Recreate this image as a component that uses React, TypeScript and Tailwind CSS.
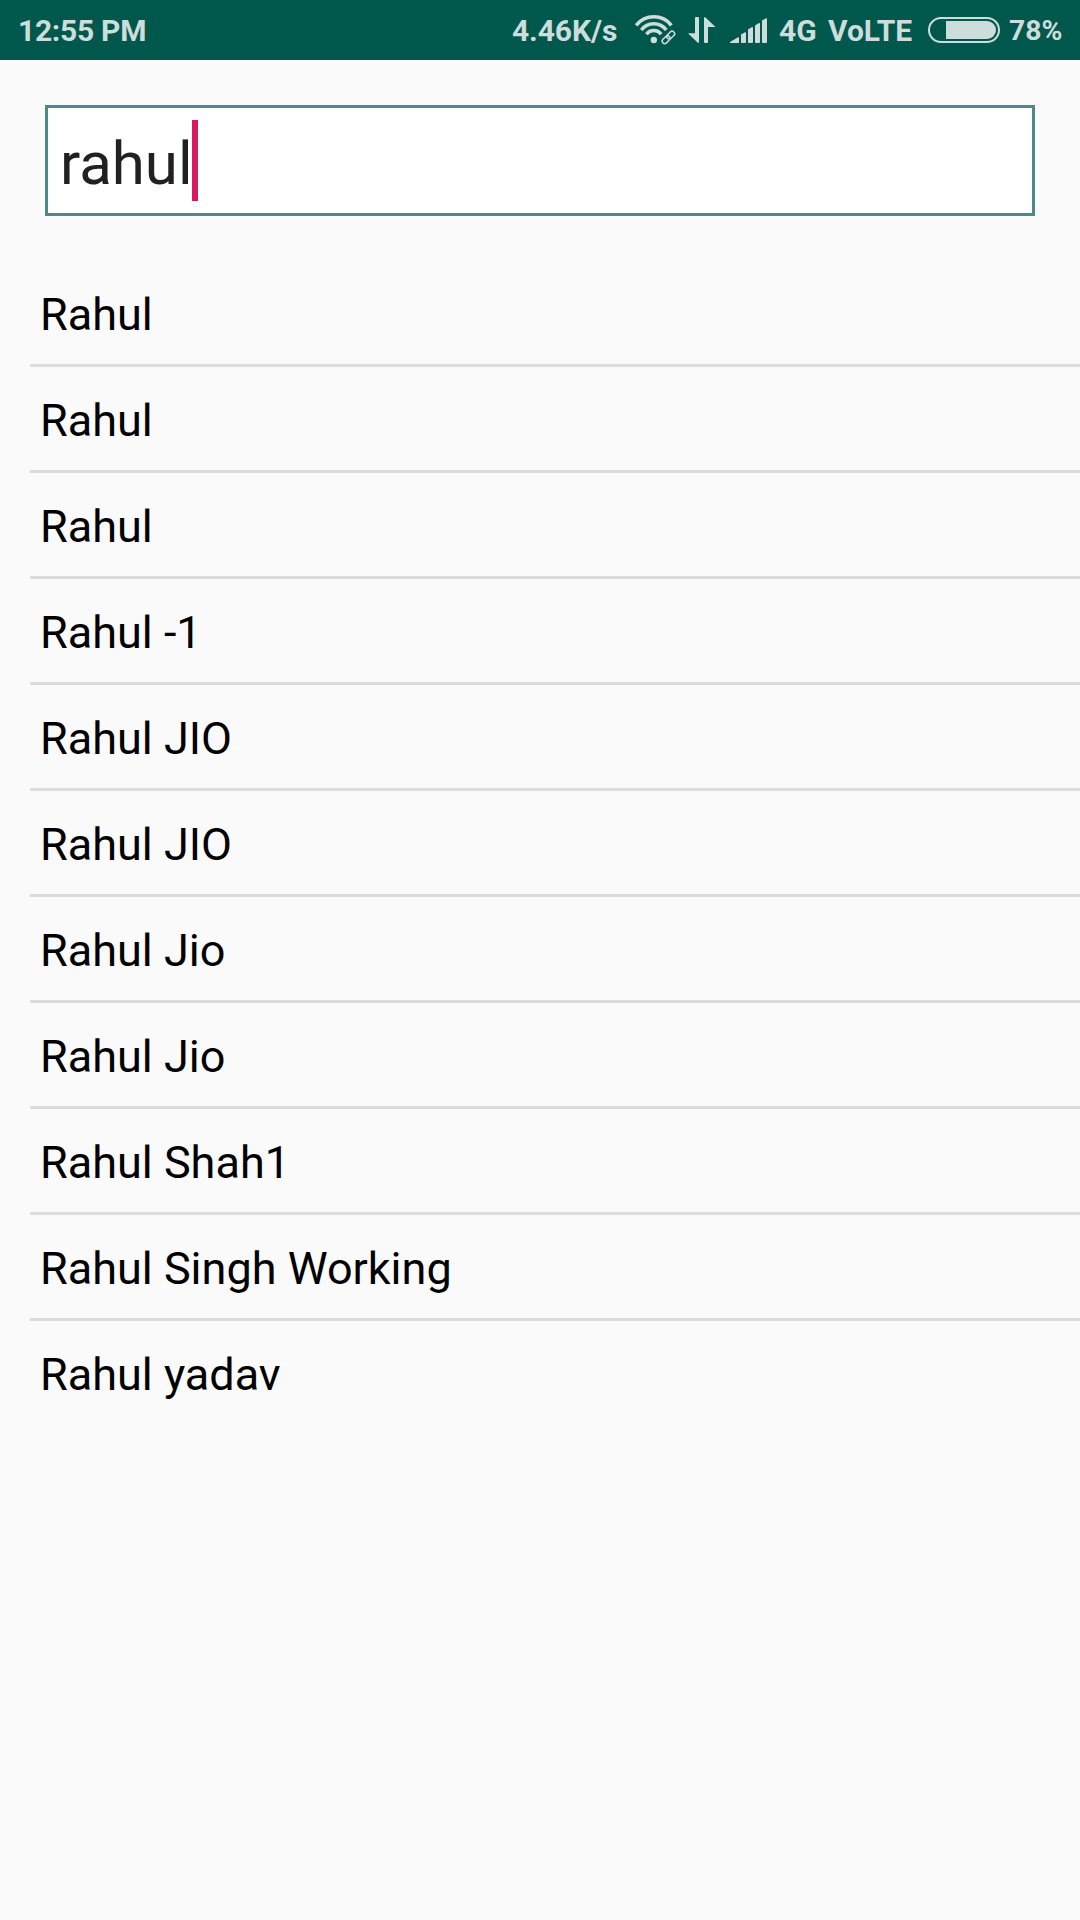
const contacts = [
  'Rahul',
  'Rahul',
  'Rahul',
  'Rahul -1',
  'Rahul JIO',
  'Rahul JIO',
  'Rahul Jio',
  'Rahul Jio',
  'Rahul Shah1',
  'Rahul Singh Working',
  'Rahul yadav',
];

function WifiLinkIcon() {
  return (
    <svg className="h-[60px] w-[42px] shrink-0" viewBox="635 0 42 60" fill="none" stroke="currentColor">
      <path d="M636.2 25.4 A22.3 22.3 0 0 1 671.4 25.4" strokeWidth="3.6" />
      <path d="M641.3 30 A15.6 15.6 0 0 1 666.3 30" strokeWidth="3.5" />
      <path d="M646.4 34.2 A9.3 9.3 0 0 1 661.2 34.2" strokeWidth="3.5" />
      <circle cx="653.8" cy="40" r="3.2" fill="currentColor" stroke="none" />
      <g transform="rotate(-45 668.4 37.4)" strokeWidth="1.5">
        <rect x="660.7" y="34.9" width="9" height="5" rx="2.5" />
        <rect x="667.1" y="34.9" width="9" height="5" rx="2.5" />
      </g>
    </svg>
  );
}

function DataArrowsIcon() {
  return (
    <svg className="h-[60px] w-[28px] shrink-0" viewBox="688 0 28 60" fill="currentColor">
      <path d="M695 18 Q695 17 696 17 H698 Q699 17 699 18 V42 Q699 43 698 43 L688 33.2 H695 Z" />
      <path d="M704 18 Q704 17 705 17 L715.5 27 H708 V42 Q708 43 707 43 H705 Q704 43 704 42 Z" />
    </svg>
  );
}

function SignalIcon() {
  return (
    <svg className="h-[60px] w-[37px] shrink-0" viewBox="730 0 37 60" fill="currentColor">
      <path d="M730 43 V42 L738 37.3 Q739 37 739 38 V43 Z" />
      <path d="M741 34.5 L745 32.2 Q746 32 746 33 V42 Q746 43 745 43 H742 Q741 43 741 42 Z" />
      <path d="M748 29.5 L752 27 Q753 26.8 753 28 V42 Q753 43 752 43 H749 Q748 43 748 42 Z" />
      <path d="M755 25.5 L759 23 Q760 22.8 760 24 V42 Q760 43 759 43 H756 Q755 43 755 42 Z" />
      <path d="M762 20.5 L766 18.2 Q767 18 767 19 V42 Q767 43 766 43 H763 Q762 43 762 42 Z" />
    </svg>
  );
}

function BatteryIcon() {
  return (
    <svg className="h-[60px] w-[72px] shrink-0" viewBox="928 0 72 60" fill="none">
      <rect x="929" y="18" width="70" height="24" rx="12" stroke="currentColor" strokeWidth="2" />
      <path d="M946 21 H987 A9 9 0 0 1 987 39 H946 Z" fill="currentColor" />
    </svg>
  );
}

function StatusBar() {
  return (
    <header className="flex h-[60px] items-center bg-[#00574b] pl-[18px] text-[30px] leading-[60px] font-bold whitespace-nowrap text-[#ccdddb]">
      <span className="w-[494px] pt-[2px] tracking-[-0.28px]">12:55 PM</span>
      <span className="w-[123px] pt-[2px] tracking-[-0.1px]">4.46K/s</span>
      <WifiLinkIcon />
      <span className="w-[11px]" />
      <DataArrowsIcon />
      <span className="w-[14px]" />
      <SignalIcon />
      <span className="ml-[12px] w-[49px] pt-[2px]">4G</span>
      <span className="w-[100px] pt-[2px]">VoLTE</span>
      <BatteryIcon />
      <span className="ml-[9px] pt-px text-[28.3px]">78%</span>
    </header>
  );
}

export default function App() {
  return (
    <div className="flex h-[1920px] w-[1080px] flex-col overflow-hidden bg-[#fafafa] font-['Roboto',sans-serif]">
      <StatusBar />
      <div className="mx-[45px] mt-[45px] flex h-[111px] items-start border-3 border-[#4c888e] bg-white pt-3 pl-3">
        <span className="w-[132px] pt-[3px] text-[60px] leading-[81px] text-[#212121]">rahul</span>
        <span className="h-[81px] w-[6px] bg-[#d81b60]" />
      </div>
      <ul className="mt-[45px] ml-[30px] flex flex-col">
        {contacts.map((name, index) => (
          <li
            key={index}
            className="flex h-[106px] items-center border-b-3 border-[#dcdcdc] pt-[3px] pl-[10px] text-[45px] leading-[53px] text-black last:border-transparent"
          >
            {name}
          </li>
        ))}
      </ul>
    </div>
  );
}
